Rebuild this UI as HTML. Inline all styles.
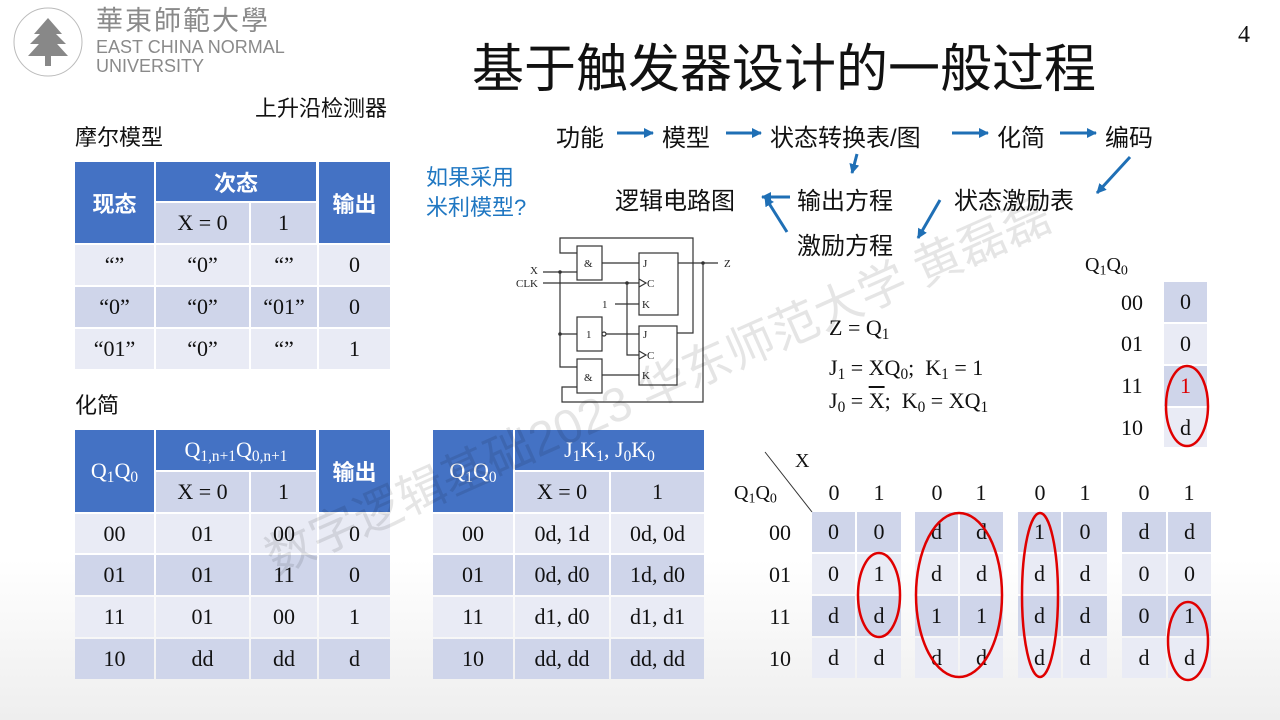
<!DOCTYPE html>
<html><head><meta charset="utf-8"><style>
body{margin:0;width:1280px;height:720px;background:#fff;position:relative;overflow:hidden;font-family:"Liberation Serif","Noto Serif CJK SC",serif;color:#111}
.a{position:absolute;white-space:nowrap}
.c{position:absolute;display:flex;align-items:center;justify-content:center;font-size:22px;white-space:nowrap}
.h{background:#4472C4;color:#fff;font-family:"Liberation Sans","Noto Sans CJK SC",sans-serif;font-weight:bold}
.hs{background:#4472C4;color:#fff}
.s{background:#CFD5EA}
.d{background:#CFD5EA}
.l{background:#E9EBF5}
.zh{font-family:"Liberation Sans","Noto Sans CJK SC",sans-serif}
sub{font-size:0.7em;vertical-align:-0.25em;line-height:0}
</style></head><body>
<div class="a" style="left:0;top:560px;width:1280px;height:160px;background:linear-gradient(#fff,#eeeeee)"></div>

<!-- logo -->
<svg class="a" style="left:8px;top:4px" width="80" height="76" viewBox="0 0 80 76">
<circle cx="40" cy="38" r="34" fill="none" stroke="#bbb" stroke-width="1"/>
<path d="M40 14 L26 30 L54 30 Z M40 22 L22 40 L58 40 Z M40 30 L20 52 L60 52 Z" fill="#888"/>
<rect x="37" y="50" width="6" height="12" fill="#888"/>
</svg>
<div class="a zh" style="left:96px;top:6px;font-size:27px;line-height:30px;color:#8a8a8a;letter-spacing:2px">華東師範大學</div>
<div class="a zh" style="left:96px;top:38px;font-size:18px;color:#8a8a8a;line-height:19px">EAST CHINA NORMAL<br>UNIVERSITY</div>

<div class="a" style="left:1238px;top:22px;font-size:24px">4</div>
<div class="a zh" style="left:472px;top:38px;font-size:52px;line-height:64px;color:#111">基于触发器设计的一般过程</div>
<div class="a zh" style="left:255px;top:91px;font-size:22px">上升沿检测器</div>
<div class="a zh" style="left:75px;top:120px;font-size:22px">摩尔模型</div>
<div class="a zh" style="left:75px;top:388px;font-size:22px">化简</div>
<div class="a zh" style="left:426px;top:163px;font-size:22px;color:#1F77C2;line-height:30px">如果采用<br>米利模型?</div>

<!-- flow -->
<div class="a zh" style="left:556px;top:118px;font-size:24px">功能</div>
<div class="a zh" style="left:662px;top:118px;font-size:24px">模型</div>
<div class="a zh" style="left:770px;top:118px;font-size:24px">状态转换表/图</div>
<div class="a zh" style="left:997px;top:118px;font-size:24px">化简</div>
<div class="a zh" style="left:1105px;top:118px;font-size:24px">编码</div>
<div class="a zh" style="left:615px;top:181px;font-size:24px">逻辑电路图</div>
<div class="a zh" style="left:797px;top:181px;font-size:24px">输出方程</div>
<div class="a zh" style="left:954px;top:181px;font-size:24px">状态激励表</div>
<div class="a zh" style="left:797px;top:226px;font-size:24px">激励方程</div>
<svg class="a" style="left:0;top:0" width="1280" height="720">
<defs><marker id="ar" markerUnits="userSpaceOnUse" markerWidth="10" markerHeight="10" refX="9" refY="5" orient="auto"><path d="M0 0 L10 5 L0 10 Z" fill="#1F6FB5"/></marker></defs>
<g stroke="#1F6FB5" stroke-width="3" marker-end="url(#ar)">
<line x1="617" y1="133" x2="653" y2="133"/>
<line x1="726" y1="133" x2="761" y2="133"/>
<line x1="952" y1="133" x2="988" y2="133"/>
<line x1="1060" y1="133" x2="1096" y2="133"/>
<line x1="857" y1="154" x2="852" y2="173"/>
<line x1="1130" y1="157" x2="1097" y2="193"/>
<line x1="790" y1="197" x2="762" y2="197"/>
<line x1="787" y1="232" x2="765" y2="197"/>
<line x1="940" y1="200" x2="918" y2="238"/>
</g>
<!-- circuit -->
<g stroke="#333" stroke-width="1.2" fill="none">
<path d="M577 253 H560 V238 H693 V333 H677"/>
<path d="M703 263 V402 H562 V387 H577"/>
<rect x="577" y="246" width="25" height="34"/>
<line x1="602" y1="263" x2="639" y2="263"/>
<rect x="639" y="253" width="39" height="62"/>
<line x1="678" y1="263" x2="718" y2="263"/>
<line x1="543" y1="272" x2="577" y2="272"/>
<path d="M560 272 V367 H577 M560 334 H577"/>
<line x1="543" y1="283" x2="639" y2="283"/>
<path d="M627 283 V355 H639"/>
<line x1="615" y1="304" x2="639" y2="304"/>
<rect x="577" y="317" width="25" height="34"/>
<circle cx="604" cy="334" r="2"/>
<line x1="606" y1="334" x2="639" y2="334"/>
<rect x="639" y="326" width="38" height="59"/>
<rect x="577" y="359" width="25" height="34"/>
<line x1="602" y1="375" x2="639" y2="375"/>
<path d="M639 279 L646 283 L639 287 M639 351 L646 355 L639 359"/>
</g>
<g fill="#333"><circle cx="703" cy="263" r="1.8"/><circle cx="560" cy="272" r="1.8"/><circle cx="627" cy="283" r="1.8"/><circle cx="560" cy="334" r="1.8"/></g>
<g font-family="Liberation Serif" font-size="11" fill="#222">
<text x="584" y="267">&amp;</text><text x="584" y="381">&amp;</text><text x="586" y="338">1</text>
<text x="643" y="267">J</text><text x="647" y="287">C</text><text x="642" y="308">K</text>
<text x="643" y="338">J</text><text x="647" y="359">C</text><text x="642" y="379">K</text>
<text x="724" y="267">Z</text><text x="530" y="274">X</text><text x="516" y="287">CLK</text><text x="602" y="308">1</text>
</g>
<line x1="765" y1="452" x2="812" y2="512" stroke="#333" stroke-width="1"/>
</svg>

<!-- equations -->
<div class="a" style="left:829px;top:315px;font-size:22px">Z = Q<sub>1</sub></div>
<div class="a" style="left:829px;top:355px;font-size:22px">J<sub>1</sub> = XQ<sub>0</sub>;&nbsp;&nbsp;K<sub>1</sub> = 1</div>
<div class="a" style="left:829px;top:388px;font-size:22px">J<sub>0</sub> = <span style="text-decoration:overline">X</span>;&nbsp;&nbsp;K<sub>0</sub> = XQ<sub>1</sub></div>

<!-- table 1 -->
<div class="c h" style="left:75px;top:162px;width:79px;height:81px">现态</div>
<div class="c h" style="left:156px;top:162px;width:160px;height:39px">次态</div>
<div class="c s" style="left:156px;top:203px;width:93px;height:40px">X = 0</div>
<div class="c s" style="left:251px;top:203px;width:65px;height:40px">1</div>
<div class="c h" style="left:319px;top:162px;width:71px;height:81px">输出</div>
<div class="c l" style="left:75px;top:245px;width:79px;height:40px">“”</div><div class="c l" style="left:156px;top:245px;width:93px;height:40px">“0”</div><div class="c l" style="left:251px;top:245px;width:66px;height:40px">“”</div><div class="c l" style="left:319px;top:245px;width:71px;height:40px">0</div>
<div class="c d" style="left:75px;top:287px;width:79px;height:40px">“0”</div><div class="c d" style="left:156px;top:287px;width:93px;height:40px">“0”</div><div class="c d" style="left:251px;top:287px;width:66px;height:40px">“01”</div><div class="c d" style="left:319px;top:287px;width:71px;height:40px">0</div>
<div class="c l" style="left:75px;top:329px;width:79px;height:40px">“01”</div><div class="c l" style="left:156px;top:329px;width:93px;height:40px">“0”</div><div class="c l" style="left:251px;top:329px;width:66px;height:40px">“”</div><div class="c l" style="left:319px;top:329px;width:71px;height:40px">1</div>

<!-- table 2 -->
<div class="c hs" style="left:75px;top:430px;width:79px;height:82px"><span>Q<sub>1</sub>Q<sub>0</sub></span></div>
<div class="c hs" style="left:156px;top:430px;width:160px;height:40px"><span>Q<sub>1,n+1</sub>Q<sub>0,n+1</sub></span></div>
<div class="c s" style="left:156px;top:472px;width:93px;height:40px">X = 0</div>
<div class="c s" style="left:251px;top:472px;width:65px;height:40px">1</div>
<div class="c h" style="left:319px;top:430px;width:71px;height:82px">输出</div>
<div class="c l" style="left:75px;top:514px;width:79px;height:39px">00</div><div class="c l" style="left:156px;top:514px;width:93px;height:39px">01</div><div class="c l" style="left:251px;top:514px;width:66px;height:39px">00</div><div class="c l" style="left:319px;top:514px;width:71px;height:39px">0</div>
<div class="c d" style="left:75px;top:555px;width:79px;height:40px">01</div><div class="c d" style="left:156px;top:555px;width:93px;height:40px">01</div><div class="c d" style="left:251px;top:555px;width:66px;height:40px">11</div><div class="c d" style="left:319px;top:555px;width:71px;height:40px">0</div>
<div class="c l" style="left:75px;top:597px;width:79px;height:40px">11</div><div class="c l" style="left:156px;top:597px;width:93px;height:40px">01</div><div class="c l" style="left:251px;top:597px;width:66px;height:40px">00</div><div class="c l" style="left:319px;top:597px;width:71px;height:40px">1</div>
<div class="c d" style="left:75px;top:639px;width:79px;height:40px">10</div><div class="c d" style="left:156px;top:639px;width:93px;height:40px">dd</div><div class="c d" style="left:251px;top:639px;width:66px;height:40px">dd</div><div class="c d" style="left:319px;top:639px;width:71px;height:40px">d</div>

<!-- table 3 -->
<div class="c hs" style="left:433px;top:430px;width:80px;height:82px"><span>Q<sub>1</sub>Q<sub>0</sub></span></div>
<div class="c hs" style="left:515px;top:430px;width:189px;height:40px"><span>J<sub>1</sub>K<sub>1</sub>, J<sub>0</sub>K<sub>0</sub></span></div>
<div class="c s" style="left:515px;top:472px;width:94px;height:40px">X = 0</div>
<div class="c s" style="left:611px;top:472px;width:93px;height:40px">1</div>
<div class="c l" style="left:433px;top:514px;width:80px;height:39px">00</div><div class="c l" style="left:515px;top:514px;width:94px;height:39px">0d, 1d</div><div class="c l" style="left:611px;top:514px;width:93px;height:39px">0d, 0d</div>
<div class="c d" style="left:433px;top:555px;width:80px;height:40px">01</div><div class="c d" style="left:515px;top:555px;width:94px;height:40px">0d, d0</div><div class="c d" style="left:611px;top:555px;width:93px;height:40px">1d, d0</div>
<div class="c l" style="left:433px;top:597px;width:80px;height:40px">11</div><div class="c l" style="left:515px;top:597px;width:94px;height:40px">d1, d0</div><div class="c l" style="left:611px;top:597px;width:93px;height:40px">d1, d1</div>
<div class="c d" style="left:433px;top:639px;width:80px;height:40px">10</div><div class="c d" style="left:515px;top:639px;width:94px;height:40px">dd, dd</div><div class="c d" style="left:611px;top:639px;width:93px;height:40px">dd, dd</div>

<!-- small table -->
<div class="a" style="left:1085px;top:254px;font-size:20px">Q<sub>1</sub>Q<sub>0</sub></div>
<div class="c" style="left:1110px;top:282px;width:44px;height:41px">00</div><div class="c d" style="left:1164px;top:282px;width:43px;height:40px">0</div>
<div class="c" style="left:1110px;top:324px;width:44px;height:40px">01</div><div class="c l" style="left:1164px;top:324px;width:43px;height:40px">0</div>
<div class="c" style="left:1110px;top:366px;width:44px;height:40px">11</div><div class="c d" style="left:1164px;top:366px;width:43px;height:40px;color:#d00">1</div>
<div class="c" style="left:1110px;top:408px;width:44px;height:40px">10</div><div class="c l" style="left:1164px;top:408px;width:43px;height:39px">d</div>

<!-- kmap -->
<div class="a" style="left:795px;top:450px;font-size:20px">X</div>
<div class="a" style="left:734px;top:482px;font-size:20px">Q<sub>1</sub>Q<sub>0</sub></div>
<div class="c" style="left:812px;top:478px;width:44px;height:30px">0</div><div class="c" style="left:857px;top:478px;width:44px;height:30px">1</div>
<div class="c" style="left:915px;top:478px;width:44px;height:30px">0</div><div class="c" style="left:959px;top:478px;width:44px;height:30px">1</div>
<div class="c" style="left:1018px;top:478px;width:44px;height:30px">0</div><div class="c" style="left:1063px;top:478px;width:44px;height:30px">1</div>
<div class="c" style="left:1122px;top:478px;width:44px;height:30px">0</div><div class="c" style="left:1167px;top:478px;width:44px;height:30px">1</div>
<div class="c" style="left:758px;top:512px;width:44px;height:41px">00</div>
<div class="c" style="left:758px;top:554px;width:44px;height:41px">01</div>
<div class="c" style="left:758px;top:596px;width:44px;height:41px">11</div>
<div class="c" style="left:758px;top:638px;width:44px;height:41px">10</div>

<div class="c d" style="left:812px;top:512px;width:43px;height:40px">0</div><div class="c d" style="left:857px;top:512px;width:44px;height:40px">0</div>
<div class="c l" style="left:812px;top:554px;width:43px;height:40px">0</div><div class="c l" style="left:857px;top:554px;width:44px;height:40px">1</div>
<div class="c d" style="left:812px;top:596px;width:43px;height:40px">d</div><div class="c d" style="left:857px;top:596px;width:44px;height:40px">d</div>
<div class="c l" style="left:812px;top:638px;width:43px;height:40px">d</div><div class="c l" style="left:857px;top:638px;width:44px;height:40px">d</div>

<div class="c d" style="left:915px;top:512px;width:43px;height:40px">d</div><div class="c d" style="left:960px;top:512px;width:43px;height:40px">d</div>
<div class="c l" style="left:915px;top:554px;width:43px;height:40px">d</div><div class="c l" style="left:960px;top:554px;width:43px;height:40px">d</div>
<div class="c d" style="left:915px;top:596px;width:43px;height:40px">1</div><div class="c d" style="left:960px;top:596px;width:43px;height:40px">1</div>
<div class="c l" style="left:915px;top:638px;width:43px;height:40px">d</div><div class="c l" style="left:960px;top:638px;width:43px;height:40px">d</div>

<div class="c d" style="left:1018px;top:512px;width:43px;height:40px">1</div><div class="c d" style="left:1063px;top:512px;width:44px;height:40px">0</div>
<div class="c l" style="left:1018px;top:554px;width:43px;height:40px">d</div><div class="c l" style="left:1063px;top:554px;width:44px;height:40px">d</div>
<div class="c d" style="left:1018px;top:596px;width:43px;height:40px">d</div><div class="c d" style="left:1063px;top:596px;width:44px;height:40px">d</div>
<div class="c l" style="left:1018px;top:638px;width:43px;height:40px">d</div><div class="c l" style="left:1063px;top:638px;width:44px;height:40px">d</div>

<div class="c d" style="left:1122px;top:512px;width:44px;height:40px">d</div><div class="c d" style="left:1168px;top:512px;width:43px;height:40px">d</div>
<div class="c l" style="left:1122px;top:554px;width:44px;height:40px">0</div><div class="c l" style="left:1168px;top:554px;width:43px;height:40px">0</div>
<div class="c d" style="left:1122px;top:596px;width:44px;height:40px">0</div><div class="c d" style="left:1168px;top:596px;width:43px;height:40px">1</div>
<div class="c l" style="left:1122px;top:638px;width:44px;height:40px">d</div><div class="c l" style="left:1168px;top:638px;width:43px;height:40px">d</div>

<svg class="a" style="left:0;top:0" width="1280" height="720">
<g fill="none" stroke="#E00000" stroke-width="2.5">
<ellipse cx="879" cy="595" rx="21" ry="42"/>
<ellipse cx="959" cy="595" rx="43" ry="82"/>
<ellipse cx="1040" cy="595" rx="18" ry="82"/>
<ellipse cx="1188" cy="641" rx="20" ry="39"/>
<ellipse cx="1187" cy="406" rx="21" ry="40"/>
</g>
<text x="0" y="0" transform="translate(275,575) rotate(-24)" font-family="Liberation Sans, Noto Sans CJK SC, sans-serif" font-size="48" fill="#000" fill-opacity="0.1">数字逻辑基础2023 华东师范大学 黄磊磊</text>
</svg>
</body></html>
